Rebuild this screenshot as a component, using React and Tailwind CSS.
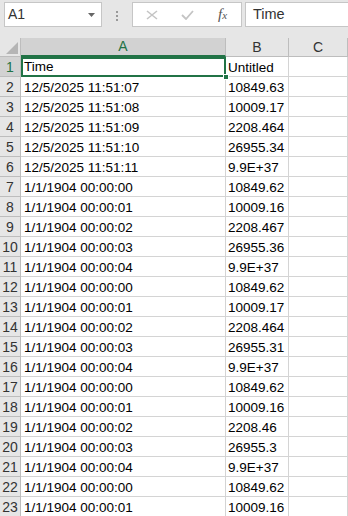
import React from 'react'

const rows = [
  ['Time', 'Untitled'],
  ['12/5/2025 11:51:07', '10849.63'],
  ['12/5/2025 11:51:08', '10009.17'],
  ['12/5/2025 11:51:09', '2208.464'],
  ['12/5/2025 11:51:10', '26955.34'],
  ['12/5/2025 11:51:11', '9.9E+37'],
  ['1/1/1904 00:00:00', '10849.62'],
  ['1/1/1904 00:00:01', '10009.16'],
  ['1/1/1904 00:00:02', '2208.467'],
  ['1/1/1904 00:00:03', '26955.36'],
  ['1/1/1904 00:00:04', '9.9E+37'],
  ['1/1/1904 00:00:00', '10849.62'],
  ['1/1/1904 00:00:01', '10009.17'],
  ['1/1/1904 00:00:02', '2208.464'],
  ['1/1/1904 00:00:03', '26955.31'],
  ['1/1/1904 00:00:04', '9.9E+37'],
  ['1/1/1904 00:00:00', '10849.62'],
  ['1/1/1904 00:00:01', '10009.16'],
  ['1/1/1904 00:00:02', '2208.46'],
  ['1/1/1904 00:00:03', '26955.3'],
  ['1/1/1904 00:00:04', '9.9E+37'],
  ['1/1/1904 00:00:00', '10849.62'],
  ['1/1/1904 00:00:01', '10009.16'],
]

function FormulaBar() {
  return (
    <div className="flex h-[38px] items-start bg-[#e6e6e6] pt-[2px] pl-[4px]">
      <div className="flex h-[25px] w-[98px] items-center justify-between border border-[#c6c6c6] bg-white pl-[3px] pr-[6px] text-[14px] text-[#333]">
        <span>A1</span>
        <svg width="7" height="4" viewBox="0 0 7 4"><path d="M0 0h7L3.5 4z" fill="#666" /></svg>
      </div>
      <div className="flex w-[30px] flex-col items-center gap-[2px] pt-[9px]">
        <span className="h-[2px] w-[2px] bg-[#999]" />
        <span className="h-[2px] w-[2px] bg-[#999]" />
        <span className="h-[2px] w-[2px] bg-[#999]" />
      </div>
      <div className="flex h-[25px] w-[110px] items-center border border-[#c6c6c6] bg-white">
        <svg className="ml-[13px]" width="12" height="10" viewBox="0 0 12 10"><path d="M1 1l10 8M11 1L1 9" stroke="#c4c4c4" strokeWidth="1.6" /></svg>
        <svg className="ml-[23px]" width="13" height="10" viewBox="0 0 13 10"><path d="M1 5l4 4 7-8" stroke="#c4c4c4" strokeWidth="1.8" fill="none" /></svg>
        <span className="ml-[24px] font-['Liberation_Serif',serif] text-[15px] italic text-[#555]">f<span className="text-[11px]">x</span></span>
      </div>
      <div className="ml-[3px] flex h-[25px] flex-1 items-center border border-r-0 border-[#c6c6c6] bg-white pl-[7px] text-[14.5px] text-[#333]">
        Time
      </div>
    </div>
  )
}

export default function App() {
  return (
    <div className="h-[516px] w-[348px] overflow-hidden bg-white font-['Liberation_Sans',sans-serif]">
      <FormulaBar />
      <div className="grid grid-cols-[21px_205px_63px_59px] text-[13.5px] leading-[17px] text-black">
        <div className="relative h-[19px] border-r border-b border-[#bdbdbd] bg-[#e6e6e6]">
          <svg className="absolute right-[2px] bottom-[2px]" width="12" height="12" viewBox="0 0 12 12"><path d="M12 0v12H0z" fill="#b5b5b5" /></svg>
        </div>
        <div className="flex h-[19px] items-center justify-center border-r border-b-2 border-r-[#bdbdbd] border-b-[#217346] bg-[#d2d2d2] text-[14px] text-[#217346]">A</div>
        <div className="flex h-[19px] items-center justify-center border-r border-b border-[#bdbdbd] bg-[#e6e6e6] text-[14px] text-[#333]">B</div>
        <div className="flex h-[19px] items-center justify-center border-r border-b border-[#bdbdbd] bg-[#e6e6e6] text-[14px] text-[#333]">C</div>
        {rows.map((r, i) => (
          <React.Fragment key={i}>
            <div className={`flex h-[20px] items-end justify-center border-r border-b border-[#bdbdbd] text-[14px] ${i === 0 ? 'bg-[#d2d2d2] text-[#217346]' : 'bg-[#e6e6e6] text-[#333]'}`}>
              {i + 1}
            </div>
            {i === 0 ? (
              <div className="relative flex h-[20px] items-end border-2 border-[#217346] pl-[1px]">
                {r[0]}
                <span className="absolute right-[-5px] bottom-[-5px] h-[6px] w-[6px] border border-white bg-[#217346]" />
              </div>
            ) : (
              <div className="flex h-[20px] items-end border-r border-b border-[#d4d4d4] pl-[3px]">{r[0]}</div>
            )}
            <div className="flex h-[20px] items-end border-r border-b border-[#d4d4d4] pl-[2px]">{r[1]}</div>
            <div className="h-[20px] border-r border-b border-[#d4d4d4]" />
          </React.Fragment>
        ))}
      </div>
    </div>
  )
}
